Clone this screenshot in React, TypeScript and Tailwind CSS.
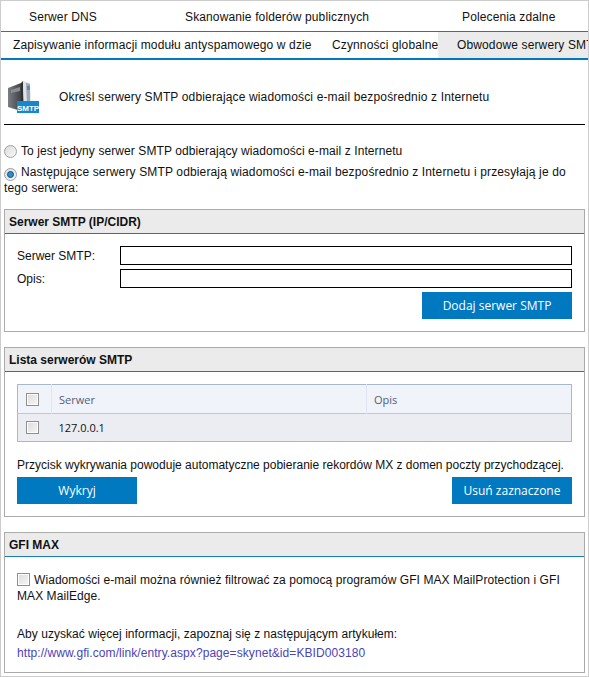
const baseFont = "font-['Liberation_Sans',Arial,sans-serif]";
const uiFont = "font-['Open_Sans',sans-serif]";

function SmtpIcon() {
  return (
    <svg width="32" height="33" viewBox="0 0 32 33" className="mb-[2px] block">
      <defs>
        <linearGradient id="towerFace" x1="0" y1="0" x2="1" y2="0">
          <stop offset="0" stopColor="#7b7e83" />
          <stop offset="1" stopColor="#3f4145" />
        </linearGradient>
      </defs>
      <polygon points="0,8 13,3 13,31 0,27" fill="url(#towerFace)" />
      <polygon points="3,10 12,7 12,11 3,13" fill="#8a8d92" />
      <polygon points="13,3 15,1 16,31 13,31" fill="#2f3135" />
      <polygon points="15,1 22,3 23,24 16,31" fill="#dfe2e6" />
      <polygon points="18,3 22,4 22,24 19,24" fill="#98a9b8" />
      <rect x="19" y="6" width="3" height="4" fill="#5f88ad" />
      <rect x="9" y="21" width="22" height="12" fill="#1488cf" />
      <text
        x="20"
        y="30.5"
        textAnchor="middle"
        fontSize="8"
        fontWeight="700"
        fill="#ffffff"
        fontFamily="'Liberation Sans', Arial, sans-serif"
      >
        SMTP
      </text>
    </svg>
  );
}

function Radio({ checked }: { checked?: boolean }) {
  return (
    <span className="flex h-[13px] w-[13px] shrink-0 items-center justify-center rounded-full border border-[#a0a0a0] bg-gradient-to-br from-[#dcdcdc] to-[#f8f8f8]">
      {checked && (
        <span className="h-[7px] w-[7px] rounded-full border border-[#1d4f72] bg-[#2b8fd0]" />
      )}
    </span>
  );
}

function Checkbox() {
  return (
    <span className="block h-[13px] w-[13px] shrink-0 border border-[#8e8f8f] bg-gradient-to-br from-[#dcdcdc] to-[#f6f6f6] outline outline-1 -outline-offset-2 outline-white" />
  );
}

function Panel({
  title,
  className,
  children,
}: {
  title: string;
  className: string;
  children: React.ReactNode;
}) {
  return (
    <section className={`mx-[3px] border border-[#ababab] ${className}`}>
      <h2 className="h-6 border-b border-[#1a7ab8] bg-[#ebebeb] pl-1 text-xs font-bold leading-[24px] text-[#111]">
        {title}
      </h2>
      {children}
    </section>
  );
}

function BlueButton({ label, width }: { label: string; width: string }) {
  return (
    <button
      type="button"
      className={`h-[27px] ${width} bg-[#0079c1] text-xs text-white ${uiFont}`}
    >
      {label}
    </button>
  );
}

export default function App() {
  return (
    <div
      className={`h-[677px] w-[589px] overflow-hidden border border-[#cccccc] bg-white text-xs text-[#111] ${baseFont}`}
    >
      <div className="flex h-[31px] items-center border-b border-[#1a7ab8] pt-[2px] tracking-[0.13px]">
        <span className="ml-7 w-[156px]">Serwer DNS</span>
        <span className="w-[277px]">Skanowanie folderów publicznych</span>
        <span>Polecenia zdalne</span>
      </div>

      <div className="flex h-[28px] border-b-2 border-[#0079c1] leading-[26px] tracking-[0.13px]">
        <span className="ml-3 w-[299px] overflow-hidden whitespace-nowrap">
          Zapisywanie informacji modułu antyspamowego w dzienniku
        </span>
        <span className="ml-5 w-[106px] overflow-hidden whitespace-nowrap">
          Czynności globalne
        </span>
        <span className="flex-1 overflow-hidden whitespace-nowrap bg-[#ebebeb] pl-[19px]">
          Obwodowe serwery SMTP
        </span>
      </div>

      <div className="mx-[3px] flex h-[65px] items-center border-b border-black pt-[10px] pl-1">
        <SmtpIcon />
        <span className="ml-[19px] tracking-[0.15px]">
          Określ serwery SMTP odbierające wiadomości e-mail bezpośrednio z Internetu
        </span>
      </div>

      <div className="mt-[18px] flex items-center gap-1 pl-[3px] tracking-[0.09px]">
        <Radio />
        <span>To jest jedyny serwer SMTP odbierający wiadomości e-mail z Internetu</span>
      </div>
      <div className="mt-[5px] pl-[3px] pr-4 leading-[16px] tracking-[0.14px]">
        <span className="mr-1 inline-block translate-y-[2px]">
          <Radio checked />
        </span>
        Następujące serwery SMTP odbierają wiadomości e-mail bezpośrednio z Internetu i
        przesyłają je do tego serwera:
      </div>

      <Panel title="Serwer SMTP (IP/CIDR)" className="mt-[13px] h-[123px]">
        <div className="px-3 pt-3">
          <div className="flex h-[19px] items-center">
            <label className="w-[103px]">Serwer SMTP:</label>
            <input type="text" className="h-[19px] flex-1 border border-black" />
          </div>
          <div className="mt-1 flex h-[19px] items-center">
            <label className="w-[103px]">Opis:</label>
            <input type="text" className="h-[19px] flex-1 border border-black" />
          </div>
          <div className="mt-1 flex justify-end">
            <BlueButton label="Dodaj serwer SMTP" width="w-[150px]" />
          </div>
        </div>
      </Panel>

      <Panel title="Lista serwerów SMTP" className="mt-[15px] h-[170px]">
        <div className="px-3 pt-3">
          <table className={`w-full border border-[#a8b8cc] text-[11px] ${uiFont}`}>
            <thead>
              <tr className="h-[29px] border-b border-[#bcc9da] bg-[#f0f3fa] text-left text-[#55607a]">
                <th className="w-[34px] border-r border-[#dfe6f2] pl-[8px] font-normal">
                  <Checkbox />
                </th>
                <th className="w-[315px] border-r border-[#dfe6f2] pt-[2px] pl-[7px] font-normal">
                  Serwer
                </th>
                <th className="pt-[2px] pl-[7px] font-normal">Opis</th>
              </tr>
            </thead>
            <tbody>
              <tr className="h-[28px] bg-[#ebedf3]">
                <td className="pl-[8px]">
                  <Checkbox />
                </td>
                <td className="pt-[2px] pl-[7px]" colSpan={2}>
                  127.0.0.1
                </td>
              </tr>
            </tbody>
          </table>
          <p className="mt-[16px] whitespace-nowrap leading-[14px]">
            Przycisk wykrywania powoduje automatyczne pobieranie rekordów MX z domen poczty
            przychodzącej.
          </p>
          <div className="mt-[5px] flex justify-between">
            <BlueButton label="Wykryj" width="w-[120px]" />
            <BlueButton label="Usuń zaznaczone" width="w-[120px]" />
          </div>
        </div>
      </Panel>

      <Panel title="GFI MAX" className="mt-[15px] h-[141px]">
        <div className="px-3 pt-[14px] leading-[16px]">
          <p className="tracking-[0.07px]">
            <span className="mr-1 inline-block translate-y-[2px]">
              <Checkbox />
            </span>
            Wiadomości e-mail można również filtrować za pomocą programów GFI MAX
            MailProtection i GFI MAX MailEdge.
          </p>
          <p className="mt-[22px] tracking-[0.04px]">
            Aby uzyskać więcej informacji, zapoznaj się z następującym artykułem:
          </p>
          <a href="#" className="mt-[3px] block tracking-[0.07px] text-[#4b43b8]">
            http://www.gfi.com/link/entry.aspx?page=skynet&id=KBID003180
          </a>
        </div>
      </Panel>
    </div>
  );
}
